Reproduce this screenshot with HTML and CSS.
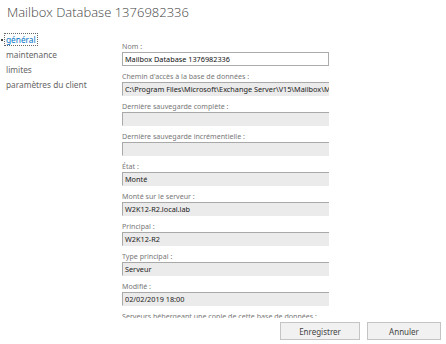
FILE: index.html
```html
<!DOCTYPE html>
<html>
<head>
  <meta charset="utf-8">
  <title>Mailbox Database 1376982336</title>
  <link rel="stylesheet" href="styles.css">
</head>
<body>
  <div class="dialog">
    <h1 class="title">Mailbox Database 1376982336</h1>
    <div class="main">
      <ul class="tabs">
        <li class="tab active"><span>général</span></li>
        <li class="tab"><span>maintenance</span></li>
        <li class="tab"><span>limites</span></li>
        <li class="tab"><span>paramètres du client</span></li>
      </ul>
      <div class="pane">
        <div class="field">
          <label>Nom :</label>
          <div class="box edit">Mailbox Database 1376982336</div>
        </div>
        <div class="field">
          <label>Chemin d'accès à la base de données :</label>
          <div class="box">C:\Program Files\Microsoft\Exchange Server\V15\Mailbox\Mailbox Database 1376982336\Mailbox Database 1376982336.edb</div>
        </div>
        <div class="field">
          <label>Dernière sauvegarde complète :</label>
          <div class="box"></div>
        </div>
        <div class="field">
          <label>Dernière sauvegarde incrémentielle :</label>
          <div class="box"></div>
        </div>
        <div class="field">
          <label>État :</label>
          <div class="box">Monté</div>
        </div>
        <div class="field">
          <label>Monté sur le serveur :</label>
          <div class="box">W2K12-R2.local.lab</div>
        </div>
        <div class="field">
          <label>Principal :</label>
          <div class="box">W2K12-R2</div>
        </div>
        <div class="field">
          <label>Type principal :</label>
          <div class="box">Serveur</div>
        </div>
        <div class="field">
          <label>Modifié :</label>
          <div class="box">02/02/2019 18:00</div>
        </div>
        <div class="field">
          <label>Serveurs hébergeant une copie de cette base de données :</label>
          <div class="box">W2K12-R2</div>
        </div>
      </div>
    </div>
    <div class="footer">
      <button class="btn save">Enregistrer</button>
      <button class="btn">Annuler</button>
    </div>
  </div>
</body>
</html>
```

FILE: styles.css
```css
body {
  margin: 0;
  background: #fff;
  font-family: "Noto Sans", "Open Sans", sans-serif;
  overflow: hidden;
}

.dialog {
  width: 446px;
  height: 344px;
  display: flex;
  flex-direction: column;
}

.title {
  margin: 0;
  height: 32px;
  padding: 3px 0 0 7px;
  box-sizing: border-box;
  font-family: "Open Sans", "Noto Sans", sans-serif;
  font-weight: 300;
  font-size: 13px;
  line-height: 18px;
  color: #444;
}

.main {
  display: flex;
  height: 286px;
}

.tabs {
  list-style: none;
  margin: 0;
  padding: 0;
  width: 122px;
}

.tab {
  position: relative;
  height: 15px;
  line-height: 15px;
  padding-left: 5px;
  font-size: 8.3px;
  color: #666;
  white-space: nowrap;
}

.tab span {
  padding: 0 1px;
}

.tab.active {
  color: #0072c6;
}

.tab.active span {
  outline: 1px dotted #666;
  outline-offset: 0;
}

.tab.active::before {
  content: "";
  position: absolute;
  left: 1px;
  top: 7px;
  width: 2px;
  height: 2px;
  background: #444;
}

.pane {
  margin-top: 4px;
  width: 207px;
  height: 282px;
  overflow: hidden;
}

.field {
  padding-top: 4px;
  height: 26px;
}

.field label {
  display: block;
  height: 12px;
  line-height: 12px;
  font-size: 7.1px;
  color: #777;
  white-space: nowrap;
}

.box {
  box-sizing: border-box;
  height: 14px;
  width: calc(100% + 20px);
  padding: 0 2px;
  line-height: 12px;
  font-size: 7.3px;
  color: #222;
  white-space: nowrap;
  overflow: hidden;
  background: #ebebeb;
  border-top: 1px solid #a9a9a9;
  border-left: 1px solid #a9a9a9;
  border-bottom: 1px solid #ebebeb;
}

.box.edit {
  width: 100%;
  background: #fff;
  color: #111;
  border: 1px solid #ababab;
}

.footer {
  display: flex;
  justify-content: flex-end;
  gap: 7px;
  padding: 4px 5px 0 0;
}

.btn {
  height: 18px;
  width: 74px;
  padding: 0;
  font-family: "Noto Sans", "Open Sans", sans-serif;
  font-size: 8px;
  color: #444;
  background: #f1f1f1;
  border: 1px solid #c4c4c4;
}

.btn.save {
  width: 80px;
}
```
